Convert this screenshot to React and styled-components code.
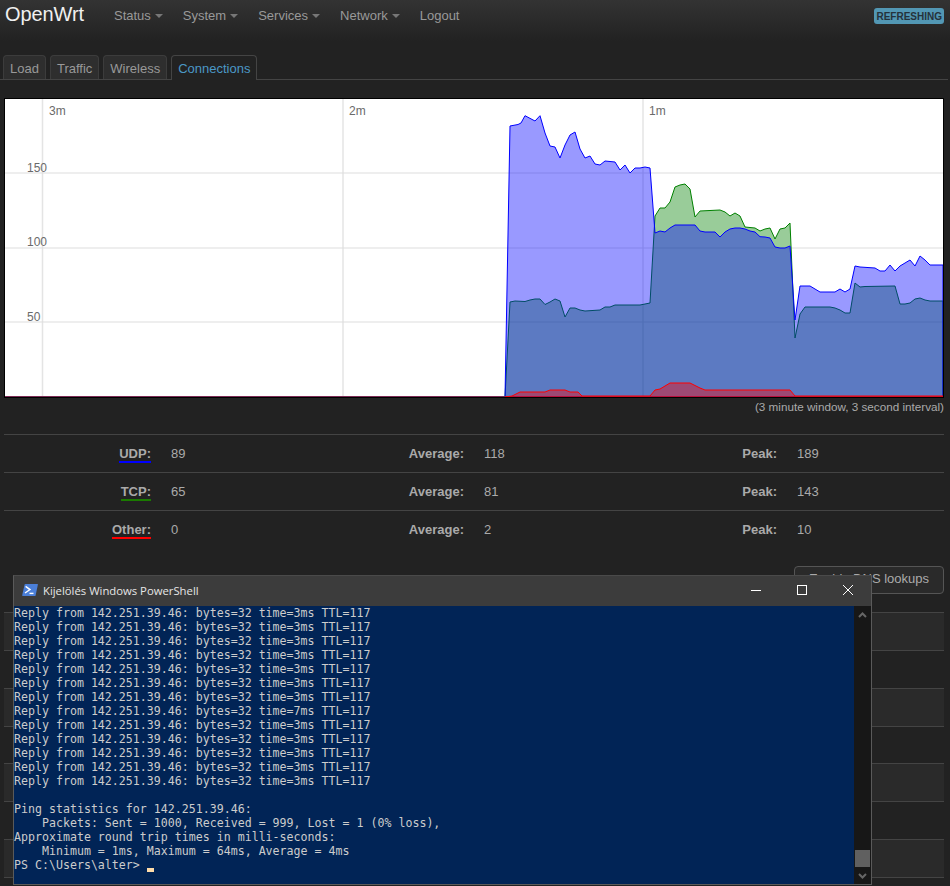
import React from 'react'
import styled, { createGlobalStyle } from 'styled-components'

const GlobalStyle = createGlobalStyle`
  html, body {
    margin: 0;
    height: 886px;
    overflow: hidden;
    background: #222;
    font-family: "Liberation Sans", Arial, sans-serif;
    font-size: 13px;
    color: #aaa;
  }
`

const Page = styled.div`
  position: relative;
  width: 950px;
  height: 886px;
  overflow: hidden;
`

const Navbar = styled.nav`
  height: 41px;
  box-sizing: border-box;
  padding: 0 6px 0 5px;
  display: flex;
  align-items: flex-start;
  background: linear-gradient(#333, #222);
`

const Brand = styled.div`
  font-size: 20px;
  letter-spacing: -0.1px;
  line-height: 28px;
  color: #f0f0f0;
  margin-right: 20px;
`

const NavItem = styled.div`
  display: flex;
  align-items: center;
  height: 31px;
  padding: 0 10px;
  color: #999;
`

const Caret = styled.span`
  width: 0;
  height: 0;
  margin: 1px 0 0 4px;
  border-left: 4px solid transparent;
  border-right: 4px solid transparent;
  border-top: 4px solid #777;
`

const Badge = styled.div`
  margin-left: auto;
  margin-top: 8px;
  padding: 0 2px;
  height: 16px;
  line-height: 17px;
  border-radius: 3px;
  background: #5297b4;
  color: #25323b;
  font-size: 10px;
  font-weight: bold;
`

const Tabs = styled.div`
  display: flex;
  gap: 4px;
  height: 24px;
  margin: 14px 2px 0 0;
  padding-left: 3px;
  border-bottom: 1px solid #444;
`

const Tab = styled.div`
  box-sizing: border-box;
  height: ${p => (p.$active ? '25px' : '24px')};
  padding: 0 6px;
  line-height: 26px;
  border: 1px solid #3c3c3c;
  border-bottom: 0;
  border-radius: 4px 4px 0 0;
  background: ${p => (p.$active ? '#222' : '#2e2e2e')};
  border-color: ${p => (p.$active ? '#444' : '#3c3c3c')};
  color: ${p => (p.$active ? '#4b98c6' : '#999')};
`

const Content = styled.div`
  padding: 18px 6px 0 4px;
`

const ChartBox = styled.div`
  height: 298px;
  border: 1px solid #000;
  background: #fff;
`

const Chart = styled.svg`
  display: block;
  width: 938px;
  height: 298px;
`

const AxisLabel = styled.text`
  font-family: "Liberation Sans", Arial, sans-serif;
  font-size: 12px;
  fill: #6a6a6a;
`

const Caption = styled.div`
  height: 36px;
  line-height: 18px;
  font-size: 11.7px;
  text-align: right;
  white-space: nowrap;
`

const Row = styled.div`
  display: grid;
  grid-template-columns: 147px 166px 147px 166px 147px 167px;
  align-items: center;
  box-sizing: border-box;
  height: 38px;
  border-top: 1px solid #444;
`

const Label = styled.div`
  position: relative;
  justify-self: end;
  font-weight: bold;
`

const LabelLine = styled.span`
  position: absolute;
  left: 0;
  right: 0;
  bottom: -2px;
  height: 2px;
  background: ${p => p.$line};
`

const Value = styled.div`
  padding-left: 20px;
`

const ButtonRow = styled.div`
  display: flex;
  justify-content: flex-end;
  margin: 18px 0 18px;
`

const Button = styled.div`
  box-sizing: border-box;
  height: 28px;
  padding: 0 14px;
  line-height: 24px;
  border: 1px solid #555;
  border-radius: 4px;
  background: #2a2a2a;
`

const ConnRow = styled.div`
  box-sizing: border-box;
  height: 37.86px;
  border-top: 1px solid #444;
  background: ${p => (p.$odd ? '#2a2a2a' : '#222')};
`

const Window = styled.div`
  position: absolute;
  left: 13px;
  top: 575px;
  width: 859px;
  height: 310px;
  box-sizing: border-box;
  border: 1px solid #5a5a5a;
  border-top-color: #4a4a4a;
  display: flex;
  flex-direction: column;
  background: #012456;
`

const TitleBar = styled.div`
  display: flex;
  align-items: center;
  box-sizing: border-box;
  height: 30px;
  flex: none;
  background: #3c3c3c;
  padding: 0 0 2px 8px;
  color: #e6e6e6;
`

const TitleText = styled.span`
  margin-left: 5px;
  font-family: "Open Sans", "Noto Sans", sans-serif;
  font-size: 11.3px;
`

const WinControls = styled.div`
  display: flex;
  margin-left: auto;
`

const WinButton = styled.div`
  display: flex;
  align-items: center;
  justify-content: center;
  width: 46px;
  height: 28px;
`

const Body = styled.div`
  flex: 1;
  display: flex;
  min-height: 0;
`

const Terminal = styled.pre`
  flex: 1;
  margin: 0;
  font-family: "DejaVu Sans Mono", "Liberation Mono", monospace;
  font-size: 11.62px;
  line-height: 14px;
  color: #cccccc;
`

const Cursor = styled.span`
  position: absolute;
  left: 133px;
  top: 292px;
  width: 7px;
  height: 4px;
  background: #fedba9;
`

const Scrollbar = styled.div`
  position: relative;
  flex: none;
  width: 17px;
  background: #171717;
`

const ScrollThumb = styled.div`
  position: absolute;
  left: 1px;
  top: 244px;
  width: 15px;
  height: 17px;
  background: #606060;
`

const ScrollArrow = styled.svg`
  position: absolute;
  left: 4px;
  top: ${p => p.$top}px;
`

const udp = [[505,397],[510,126],[518,124.5],[521,123],[525,115.7],[535,121],[540,115.7],[545,133],[550,146],[555,147],[560,158],[565,145],[570,135],[575,132],[580,149],[585,158],[590,156],[595,164],[600,165],[605,161],[615,162],[620,170],[625,165],[630,173],[635,168],[640,168],[645,167],[650,168],[655,233],[660,231],[665,232],[670,228],[675,225],[695,225],[700,231],[705,232],[715,232],[720,237],[725,232],[730,229],[735,228],[740,228],[745,229],[750,231],[755,232],[760,236.7],[765,237],[770,238],[775,247],[780,248],[785,248],[790,246],[795,320],[800,286],[810,286],[815,289],[820,292],[835,292],[840,289],[845,292],[850,289],[855,266],[860,267],[875,268],[880,271],[885,271],[890,265],[895,271],[900,266],[905,263],[910,260],[915,266],[920,256],[925,260],[930,265],[943,265],[943,397]]
const tcp = [[505,397],[510,302],[515,301],[525,301.5],[530,300],[535,299],[540,299],[545,304.5],[550,302],[555,299],[560,301],[565,317],[570,308],[575,308],[580,310],[585,311],[600,310],[605,307],[610,307],[615,305],[640,305],[650,303],[655,216],[660,208],[665,208],[670,202],[675,187],[680,185],[685,184],[690,189],[695,217],[700,211],[720,210],[725,212],[730,216],[735,213],[740,216],[745,227],[755,228],[760,231],[765,229],[770,228],[775,239],[780,229],[785,228],[790,223],[795,338],[800,314],[805,307],[830,307],[835,308],[840,310],[845,313],[850,313],[855,283],[860,287],[865,286.5],[895,286],[900,304],[905,304],[910,303],[915,299],[920,298],[925,300],[930,301],[943,301],[943,397]]
const other = [[505,397],[512,396],[520,392],[545,392],[550,390],[565,390],[570,392],[578,392],[582,396],[650,396],[655,390],[660,389],[670,383],[690,383],[700,388],[705,390],[790,390],[795,396],[943,396],[943,397]]

const pts = a => a.map(p => p.join(',')).join(' ')

const stats = [
  { name: 'UDP:', line: '#0000ff', cur: 89, avg: 118, peak: 189 },
  { name: 'TCP:', line: '#1a7a00', cur: 65, avg: 81, peak: 143 },
  { name: 'Other:', line: '#ff0000', cur: 0, avg: 2, peak: 10 },
]

const reply = t => `Reply from 142.251.39.46: bytes=32 time=${t}ms TTL=117`
const terminalText = [
  ...[3, 3, 3, 3, 3, 3, 3, 7, 3, 3, 3, 3, 3].map(reply),
  '',
  'Ping statistics for 142.251.39.46:',
  '    Packets: Sent = 1000, Received = 999, Lost = 1 (0% loss),',
  'Approximate round trip times in milli-seconds:',
  '    Minimum = 1ms, Maximum = 64ms, Average = 4ms',
  'PS C:\\Users\\alter>',
].join('\n')

function App() {
  return (
    <Page>
      <GlobalStyle />
      <Navbar>
        <Brand>OpenWrt</Brand>
        {['Status', 'System', 'Services', 'Network'].map(n => (
          <NavItem key={n}>{n}<Caret /></NavItem>
        ))}
        <NavItem>Logout</NavItem>
        <Badge>REFRESHING</Badge>
      </Navbar>
      <Tabs>
        <Tab>Load</Tab>
        <Tab>Traffic</Tab>
        <Tab>Wireless</Tab>
        <Tab $active>Connections</Tab>
      </Tabs>
      <Content>
        <ChartBox>
          <Chart viewBox="5 99 938 298">
            {[42.5, 343, 643].map(x => (
              <line key={x} x1={x} x2={x} y1="99" y2="397" stroke="#e4e4e4" strokeWidth="1.5" />
            ))}
            {[173, 248, 322].map(y => (
              <line key={y} x1="5" x2="943" y1={y} y2={y} stroke="#ddd" strokeWidth="1" />
            ))}
            <AxisLabel x="49" y="115">3m</AxisLabel>
            <AxisLabel x="349" y="115">2m</AxisLabel>
            <AxisLabel x="649" y="115">1m</AxisLabel>
            <AxisLabel x="27" y="172">150</AxisLabel>
            <AxisLabel x="27" y="246">100</AxisLabel>
            <AxisLabel x="27" y="321">50</AxisLabel>
            <polygon points={pts(tcp)} fill="#008000" fillOpacity="0.4" stroke="#008000" strokeWidth="1" />
            <polygon points={pts(udp)} fill="#0000ff" fillOpacity="0.4" stroke="#0000ff" strokeWidth="1" />
            <polygon points={pts(other)} fill="#ff0000" fillOpacity="0.4" stroke="#ff0000" strokeWidth="1" />
            <line x1="5" x2="505" y1="396.5" y2="396.5" stroke="#7d2c55" strokeWidth="1" />
          </Chart>
        </ChartBox>
        <Caption>(3 minute window, 3 second interval)</Caption>
        {stats.map(s => (
          <Row key={s.name}>
            <Label>{s.name}<LabelLine $line={s.line} /></Label>
            <Value>{s.cur}</Value>
            <Label>Average:</Label>
            <Value>{s.avg}</Value>
            <Label>Peak:</Label>
            <Value>{s.peak}</Value>
          </Row>
        ))}
        <ButtonRow>
          <Button>Enable DNS lookups</Button>
        </ButtonRow>
        {[0, 1, 2, 3, 4, 5, 6, 7].map(i => (
          <ConnRow key={i} $odd={i % 2 === 0} />
        ))}
      </Content>

      <Window>
        <TitleBar>
          <svg width="16" height="14" viewBox="0 0 16 14">
            <path d="M3.5 1 H15.5 Q16 1 15.9 1.6 L13.6 12.4 Q13.5 13 12.8 13 H0.8 Q0 13 0.2 12.3 L2.6 1.6 Q2.7 1 3.5 1 Z" fill="#4b7fd8" />
            <path d="M3.6 3.4 L8 6.6 L3 10" fill="none" stroke="#fff" strokeWidth="1.4" />
            <path d="M7.5 10.4 H11.5" stroke="#fff" strokeWidth="1.4" />
          </svg>
          <TitleText>Kijelölés Windows PowerShell</TitleText>
          <WinControls>
            <WinButton>
              <svg width="10" height="10" viewBox="0 0 10 10"><path d="M0 5.5 H10" stroke="#fff" /></svg>
            </WinButton>
            <WinButton>
              <svg width="10" height="10" viewBox="0 0 10 10"><rect x="0.5" y="0.5" width="9" height="9" fill="none" stroke="#fff" /></svg>
            </WinButton>
            <WinButton>
              <svg width="10" height="10" viewBox="0 0 10 10"><path d="M0 0 L10 10 M10 0 L0 10" stroke="#fff" /></svg>
            </WinButton>
          </WinControls>
        </TitleBar>
        <Body>
          <Terminal>{terminalText}</Terminal>
          <Cursor />
          <Scrollbar>
            <ScrollArrow $top={6} width="9" height="6" viewBox="0 0 9 6">
              <path d="M1 5 L4.5 1.5 L8 5" fill="none" stroke="#666" strokeWidth="2" />
            </ScrollArrow>
            <ScrollThumb />
            <ScrollArrow $top={267} width="9" height="6" viewBox="0 0 9 6">
              <path d="M1 1 L4.5 4.5 L8 1" fill="none" stroke="#666" strokeWidth="2" />
            </ScrollArrow>
          </Scrollbar>
        </Body>
      </Window>
    </Page>
  )
}

export default App
